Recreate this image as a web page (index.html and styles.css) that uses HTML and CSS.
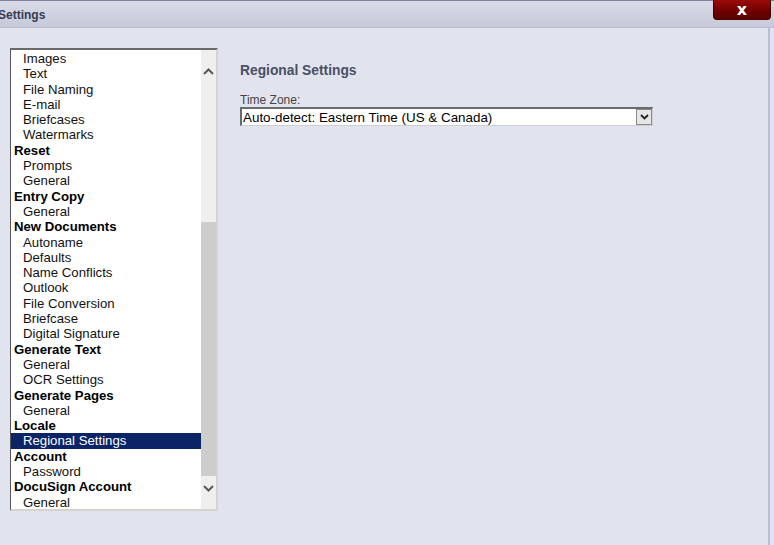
FILE: index.html
```html
<!DOCTYPE html>
<html lang="en">
  <head>
    <meta charset="UTF-8" />
    <meta name="viewport" content="width=device-width, initial-scale=1.0" />
    <title>Settings</title>
    <link rel="stylesheet" href="styles.css">
  </head>
  <body>
    <div class="titlebar">
      <span class="title">Settings</span>
      <button class="close">x</button>
    </div>

    <div class="window">
      <div class="listbox">
        <ul class="items">
          <li class="item">Images</li>
          <li class="item">Text</li>
          <li class="item">File Naming</li>
          <li class="item">E-mail</li>
          <li class="item">Briefcases</li>
          <li class="item">Watermarks</li>
          <li class="group">Reset</li>
          <li class="item">Prompts</li>
          <li class="item">General</li>
          <li class="group">Entry Copy</li>
          <li class="item">General</li>
          <li class="group">New Documents</li>
          <li class="item">Autoname</li>
          <li class="item">Defaults</li>
          <li class="item">Name Conflicts</li>
          <li class="item">Outlook</li>
          <li class="item">File Conversion</li>
          <li class="item">Briefcase</li>
          <li class="item">Digital Signature</li>
          <li class="group">Generate Text</li>
          <li class="item">General</li>
          <li class="item">OCR Settings</li>
          <li class="group">Generate Pages</li>
          <li class="item">General</li>
          <li class="group">Locale</li>
          <li class="item selected">Regional Settings</li>
          <li class="group">Account</li>
          <li class="item">Password</li>
          <li class="group">DocuSign Account</li>
          <li class="item">General</li>
        </ul>
        <div class="scrollbar">
          <div class="sb-up">
            <svg width="11" height="7" viewBox="0 0 11 7"><polyline points="1,6 5.5,1.5 10,6" fill="none" stroke="#5a5a5a" stroke-width="2"/></svg>
          </div>
          <div class="sb-track"><div class="sb-thumb"></div></div>
          <div class="sb-down">
            <svg width="11" height="7" viewBox="0 0 11 7"><polyline points="1,1 5.5,5.5 10,1" fill="none" stroke="#5a5a5a" stroke-width="2"/></svg>
          </div>
        </div>
      </div>

      <div class="panel">
        <h2 class="panel-title">Regional Settings</h2>
        <label class="field-label">Time Zone:</label>
        <div class="select">
          <span class="select-value">Auto-detect: Eastern Time (US &amp; Canada)</span>
          <span class="select-btn">
            <svg width="9" height="6" viewBox="0 0 9 6"><polyline points="1,1 4.5,4.5 8,1" fill="none" stroke="#222" stroke-width="1.8"/></svg>
          </span>
        </div>
      </div>
    </div>
  </body>
</html>
```

FILE: styles.css
```css
html, body {
  margin: 0;
  padding: 0;
  height: 100%;
}
body {
  font-family: "Liberation Sans", Arial, sans-serif;
  background: #e1e4ee;
  overflow: hidden;
}
.titlebar {
  position: relative;
  height: 28px;
  box-sizing: border-box;
  background: linear-gradient(#d9dce7, #c6cad9);
  border-top: 1px solid #7e829a;
  border-bottom: 1px solid #b8bcd6;
}
.title {
  display: block;
  margin-left: -2px;
  padding-top: 7px;
  font-size: 12px;
  font-weight: bold;
  color: #383c52;
}
.close {
  position: absolute;
  top: -1px;
  right: 3px;
  width: 58px;
  height: 20px;
  border: 1px solid #4a0000;
  border-top: none;
  border-radius: 0 0 4px 4px;
  background: linear-gradient(#9a0a0a, #6e0000 60%, #5a0000);
  color: #fff;
  font-family: "DejaVu Sans", sans-serif;
  font-size: 16px;
  font-weight: bold;
  line-height: 14px;
  padding: 0;
}
.window {
  display: flex;
  align-items: flex-start;
  gap: 22px;
  width: 770px;
  height: 517px;
  box-sizing: border-box;
  padding: 20px 0 0 10px;
  border-right: 2px solid #b9bdd7;
}
.listbox {
  display: flex;
  width: 208px;
  height: 463px;
  box-sizing: border-box;
  background: #fff;
  border-top: 2px solid #6a6a6a;
  border-left: 1px solid #555;
  border-right: 2px solid #d6d3cc;
  border-bottom: 2px solid #d6d3cc;
}
.items {
  list-style: none;
  margin: 0;
  padding: 1px 0 0;
  width: 190px;
  overflow: hidden;
  font-size: 13.2px;
  line-height: 15.3px;
  color: #111;
}
.item {
  padding-left: 12px;
}
.group {
  padding-left: 3px;
  font-weight: bold;
  color: #000;
}
.item.selected {
  background: #0b2466;
  color: #fff;
}
.scrollbar {
  display: flex;
  flex-direction: column;
  width: 15px;
  background: #efefef;
}
.sb-up {
  height: 40px;
  display: flex;
  justify-content: center;
  padding-top: 18px;
  box-sizing: border-box;
}
.sb-track {
  flex: 1;
  display: flex;
  flex-direction: column;
  justify-content: flex-end;
}
.sb-thumb {
  height: 254px;
  background: #cdcdcd;
}
.sb-down {
  height: 33px;
  display: flex;
  justify-content: center;
  padding-top: 9px;
  box-sizing: border-box;
}
.panel {
  padding-top: 15px;
}
.panel-title {
  margin: 0;
  font-size: 13.8px;
  font-weight: bold;
  color: #4a4f66;
}
.field-label {
  display: block;
  margin-top: 15px;
  font-size: 12px;
  color: #444;
  line-height: 14px;
}
.select {
  display: flex;
  align-items: center;
  width: 413px;
  height: 19px;
  box-sizing: border-box;
  background: #fff;
  border-top: 2px solid #6a6a6a;
  border-left: 2px solid #6a6a6a;
  border-right: 1px solid #cfcfcf;
  border-bottom: 1px solid #cfcfcf;
}
.select-value {
  flex: 1;
  padding-left: 1px;
  font-size: 13.4px;
  color: #000;
}
.select-btn {
  display: flex;
  align-items: center;
  justify-content: center;
  width: 16px;
  height: 16px;
  box-sizing: border-box;
  background: #e6e6e6;
  border: 1px solid #8a8a8a;
}
```
